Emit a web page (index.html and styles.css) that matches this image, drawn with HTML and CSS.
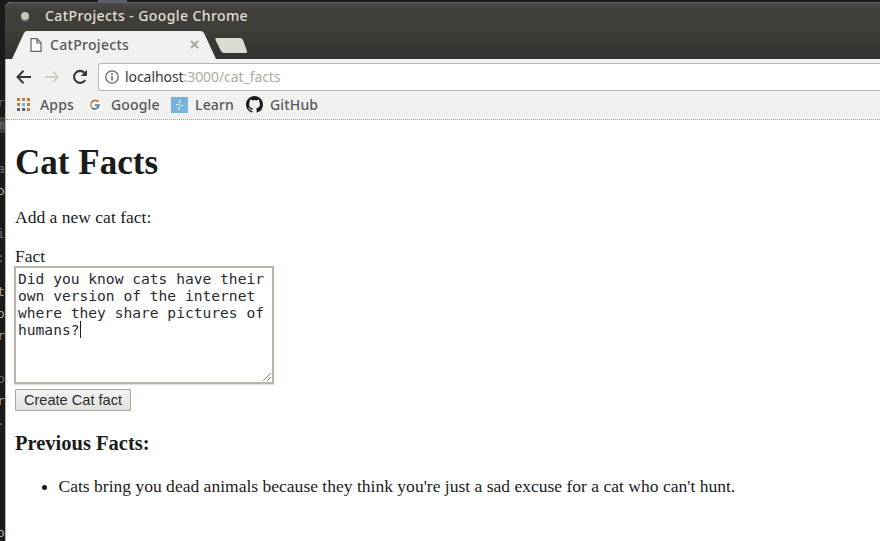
FILE: index.html
```html
<!DOCTYPE html>
<html lang="en">
<head>
<meta charset="utf-8">
<title>CatProjects</title>
<link rel="stylesheet" href="styles.css">
</head>
<body>
<div class="desktop">
  <aside class="terminal" aria-hidden="true">
    <span class="bit b1">r.</span><span class="bit b2">m</span><span class="bit b3">ar</span><span class="bit b4 lit">o</span><span class="bit b5">in</span><span class="bit b6">:</span><span class="bit b7 lit">t</span><span class="bit b8 lit">o</span><span class="bit b9 lit">r</span><span class="bit b10">p</span><span class="bit b11 lit">r</span><span class="bit b12">.</span><span class="bit b13 lit">o</span>
  </aside>
  <div class="window">
    <header class="frame">
      <div class="titlebar"><span class="dot"></span><span class="window-title">CatProjects - Google Chrome</span></div>
      <div class="tabs">
        <svg class="tab-shape" width="243" height="28" viewBox="0 0 243 28"><path d="M0 28 7 28 19 2Q20 0 22 0H195Q198 0 199 2L211 28Z" fill="#f1f1ef"/><path d="M211 7H235Q237 7 238 9L242 20Q242.500 22 240 22H219Q217 22 216 20L210.500 9Q210 7 211 7Z" fill="#dcdbd2"/></svg>
        <div class="tab">
          <svg width="12" height="14" viewBox="0 0 12 14"><path d="M1 .7H7L11 4.700V13.300H1ZM7 .7V5H11" fill="#fff" stroke="#5c6270" stroke-width="1.200"/></svg>
          <span class="tab-title">CatProjects</span>
          <svg class="close" width="9" height="9" viewBox="0 0 9 9"><path d="M1 1 8 8M8 1 1 8" stroke="#aaa798" stroke-width="1.900"/></svg>
        </div>
      </div>
    </header>
    <nav class="toolbar">
      <svg class="back" width="15" height="14" viewBox="0 0 15 14"><path d="M7.500 .8 1.500 7 7.500 13.200M1.500 7H15" fill="none" stroke="#35373a" stroke-width="2"/></svg>
      <svg class="forward" width="14" height="12" viewBox="0 0 14 12"><path d="M8 .7 13 6 8 11.300M13 6H0" fill="none" stroke="#c8c5b8" stroke-width="1.300"/></svg>
      <svg class="reload" width="16" height="16" viewBox="0 0 16 16"><path d="M13.200 11A6 6 0 1 1 12.500 3.800" fill="none" stroke="#35373a" stroke-width="2.100"/><path d="M15 .7V7H8.700Z" fill="#35373a"/></svg>
      <div class="address">
        <svg width="14" height="14" viewBox="0 0 14 14"><circle cx="7" cy="7" r="6.200" fill="none" stroke="#65645e" stroke-width="1.300"/><path d="M7 6V10.500M7 3.300V4.900" stroke="#65645e" stroke-width="1.500"/></svg>
        <span class="url"><span class="host">localhost</span>:3000/cat_facts</span>
      </div>
    </nav>
    <nav class="bookmarks">
      <svg class="apps-icon" width="13" height="13" viewBox="0 0 13 13"><g fill="#b97d4c"><path d="M0 0h3v3H0zM5 0h3v3H5zM10 0h3v3h-3zM0 5h3v3H0zM10 5h3v3h-3z"/></g><path d="M5 5h3v3H5z" fill="#78b2de"/><path d="M0 10h3v3H0zM5 10h3v3H5z" fill="#5c6478"/><path d="M10 10h3v3h-3z" fill="#b97d4c"/></svg>
      <span class="label apps">Apps</span>
      <svg class="google-icon" width="14" height="14" viewBox="0 0 14 14"><circle cx="7" cy="7" r="7" fill="#fff"/><path d="M10.500 4A4.300 4.300 0 0 0 3 5.500" fill="none" stroke="#bd7949" stroke-width="2"/><path d="M3 5.500A4.300 4.300 0 0 0 4 10" fill="none" stroke="#cda36e" stroke-width="2"/><path d="M4 10A4.200 4.200 0 0 0 10.900 7.200H7" fill="none" stroke="#62809f" stroke-width="2"/></svg>
      <span class="label google">Google</span>
      <svg class="learn-icon" width="17" height="16" viewBox="0 0 17 16"><path d="M0 0h17v16H0z" fill="#78b2de"/><path d="M9.500 3 8 6M5 7.500h3M9 8.500h3M8.500 10 7.500 13" stroke="#eef5f8" stroke-width="1.200"/></svg>
      <span class="label learn">Learn</span>
      <svg class="github-icon" width="17" height="17" viewBox="0 0 16 16"><path fill="#1b1c1e" d="M8 0C3.580 0 0 3.580 0 8c0 3.540 2.290 6.530 5.470 7.590.4.070.55-.17.55-.38 0-.19-.01-.82-.01-1.490-2.010.37-2.530-.49-2.690-.94-.09-.23-.48-.94-.82-1.130-.28-.15-.68-.52-.01-.53.63-.01 1.080.58 1.230.82.72 1.210 1.870.87 2.330.66.07-.52.28-.87.51-1.070-1.780-.2-3.640-.89-3.640-3.950 0-.87.31-1.590.82-2.150-.08-.2-.36-1.020.08-2.120 0 0 .67-.21 2.200.82a7.600 7.600 0 0 1 4 0c1.530-1.040 2.200-.82 2.200-.82.44 1.100.16 1.920.08 2.120.51.56.82 1.270.82 2.150 0 3.070-1.870 3.750-3.650 3.950.29.25.54.73.54 1.480 0 1.070-.01 1.930-.01 2.200 0 .21.15.46.55.38A8.010 8.010 0 0 0 16 8c0-4.420-3.580-8-8-8Z"/></svg>
      <span class="label github">GitHub</span>
    </nav>
    <main class="page">
      <h1>Cat Facts</h1>
      <p class="intro">Add a new cat fact:</p>
      <form>
        <label for="fact">Fact</label>
        <div class="field">
          <div id="fact" class="fact" role="textbox">Did you know cats have their<br>own version of the internet<br>where they share pictures of<br>humans?<span class="caret"></span></div>
          <svg class="grip" width="8" height="8" viewBox="0 0 8 8"><path d="M0 8 8 0M4 8 8 4" stroke="#8d8b82"/></svg>
        </div>
        <button type="button">Create Cat fact</button>
      </form>
      <h3>Previous Facts:</h3>
      <ul><li>Cats bring you dead animals because they think you're just a sad excuse for a cat who can't hunt.</li></ul>
    </main>
  </div>
</div>
</body>
</html>
```
FILE: styles.css
```css
* { box-sizing: border-box; }
body { margin: 0; overflow: hidden; background: #1b1b1b; }
svg { display: block; flex: none; }
.desktop { display: flex; width: 880px; height: 541px; background: linear-gradient(90deg, transparent 98px, #59616f 98px, #59616f 127px, transparent 127px) 0 0 / 100% 2px no-repeat #1b1b1b; }
.terminal { position: relative; width: 5px; overflow: hidden; flex: none; font: 13px/16px "DejaVu Sans Mono", monospace; color: #626b80; }
.bit { position: absolute; left: -3px; white-space: nowrap; }
.lit { color: #aaa99f; }
.b1 { top: 95px; } .b2 { top: 117px; background: #403f3a; } .b3 { top: 161px; } .b4 { top: 183px; }
.b5 { top: 226px; } .b6 { top: 250px; } .b7 { top: 284px; } .b8 { top: 306px; } .b9 { top: 328px; }
.b10 { top: 371px; } .b11 { top: 393px; } .b12 { top: 413px; } .b13 { top: 525px; }
.window { display: flex; flex-direction: column; flex: 1; margin-top: 2px; min-width: 0; border-left: 1px solid #b9b6a9; background: #fff; border-top-left-radius: 6px; }
.frame { height: 57px; margin-left: -1px; background: linear-gradient(#4b4a49 0, #403f3a 8px, #403f3a 24px, #32312d); border-top: 1px solid #5c6068; border-top-left-radius: 6px; font-family: "Noto Sans", sans-serif; }
.titlebar { display: flex; align-items: center; height: 28px; padding: 0 0 2px 16px; }
.dot { width: 8px; height: 8px; border-radius: 50%; background: #c9c6b9; box-shadow: 0 2px 0 #59616f; }
.window-title { margin-left: 16px; color: #e0ded4; font-size: 14px; font-weight: 500; letter-spacing: .4px; line-height: 24px; white-space: nowrap; }
.tabs { position: relative; height: 28px; }
.tab-shape { position: absolute; left: 0; top: 0; }
.tab { position: relative; display: flex; align-items: center; height: 27px; width: 194px; padding-left: 25px; }
.tab-title { margin-left: 8px; color: #55585d; font-size: 14px; font-weight: 500; letter-spacing: .3px; }
.close { margin-left: auto; }
.toolbar { display: flex; align-items: center; height: 35px; padding-left: 10px; background: #f1f1ef; font-family: "Noto Sans", sans-serif; }
.forward { margin-left: 14px; }
.reload { margin-left: 13px; }
.address { display: flex; align-items: center; flex: 1; height: 28px; margin: 0 0 0 10px; padding-left: 6px; border: 1px solid #b9b6a9; border-right: 0; border-radius: 3px 0 0 3px; background: #fff; }
.url { margin-left: 6px; color: #aeaba0; font-size: 14px; letter-spacing: -.07px; line-height: 24px; white-space: nowrap; }
.host { color: #35373a; }
.bookmarks { display: flex; align-items: center; height: 26px; padding: 0 0 4px 11px; background: #f1f1ef; border-bottom: 1px dotted #aaa798; font-family: "Noto Sans", sans-serif; font-size: 14px; font-weight: 500; letter-spacing: .15px; line-height: 21px; color: #55585d; }
.label { white-space: nowrap; flex: none; }
.apps { margin-left: 10px; width: 35px; }
.google-icon { margin-left: 13px; }
.google { margin-left: 9px; width: 50px; }
.learn-icon { margin-left: 10px; }
.learn { margin-left: 7px; width: 39px; }
.github-icon { margin-left: 12px; }
.github { margin-left: 7px; }
.page { flex: 1; padding-left: 9px; color: #1b1b1b; font: 17.550px/20px "Liberation Serif", serif; }
h1 { margin: 23px 0 0; font-size: 35.100px; line-height: 40px; }
.intro { margin: 24px 0 0; }
form { margin-top: 19px; }
label { display: block; }
.field { position: relative; width: 260px; height: 118px; margin-left: -1px; padding: 2px; border: 2px solid #b9b6a9; background: #fff; box-shadow: 0 1px 1px #e2e1dc; }
.fact { font: 14.600px/17px "DejaVu Sans Mono", monospace; color: #292b2e; white-space: nowrap; }
.caret { display: inline-block; height: 17px; width: 1px; background: #1b1b1b; vertical-align: top; }
.grip { position: absolute; right: 1px; bottom: 1px; }
button { display: block; width: 116px; height: 22px; margin-top: 5px; padding: 0; border: 1px solid #aaa798; border-radius: 1px; background: linear-gradient(#f4f4f2, #e2e1de); color: #292b2e; font: 14.600px/20px "Liberation Sans", sans-serif; white-space: nowrap; }
h3 { margin: 20px 0 0; font-size: 20.500px; line-height: 24px; }
ul { margin: 21px 0 0; padding-left: 43.500px; }
li { white-space: nowrap; }
```
